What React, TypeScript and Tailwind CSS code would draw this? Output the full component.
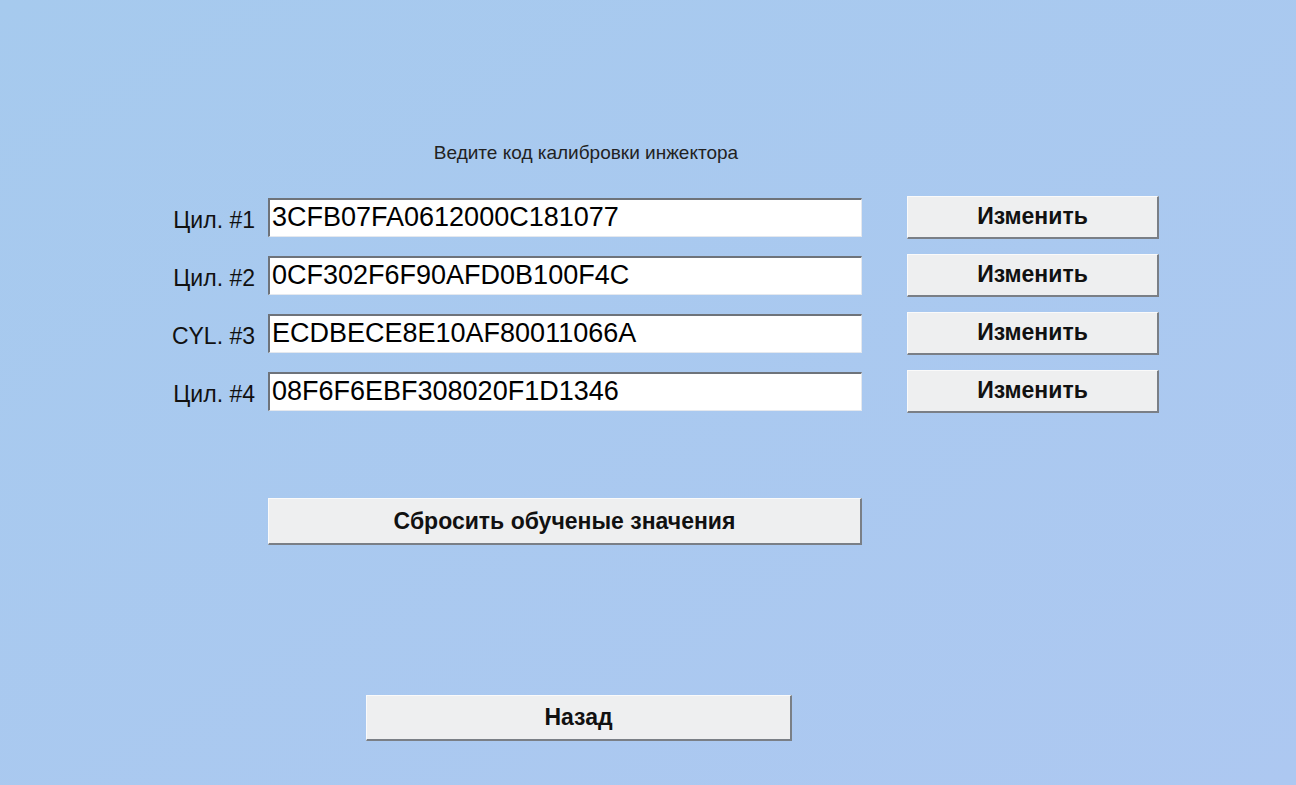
import React from "react";

const rows = [
  { label: "Цил. #1", code: "3CFB07FA0612000C181077" },
  { label: "Цил. #2", code: "0CF302F6F90AFD0B100F4C" },
  { label: "CYL. #3", code: "ECDBECE8E10AF80011066A" },
  { label: "Цил. #4", code: "08F6F6EBF308020F1D1346" },
];

const btn =
  "flex items-center justify-center bg-[#eeeff0] border-t border-l border-t-[#fafafa] border-l-[#fafafa] border-r-2 border-b-2 border-r-[#7a7f86] border-b-[#7a7f86] font-bold text-[23px] text-[#111]";

const App: React.FC = () => {
  return (
    <div
      className="w-full h-[785px] bg-gradient-to-br from-[#a6caee] to-[#adc8f1] overflow-hidden"
      style={{ fontFamily: '"Liberation Sans", Arial, sans-serif' }}
    >
      {/* заголовок */}
      <div className="pt-[143px] pl-[386px] w-[786px] text-center text-[19px] leading-[20px] text-[#222]">
        Ведите код калибровки инжектора
      </div>

      {/* строки цилиндров */}
      <div className="mt-[33px] flex flex-col gap-[16px]">
        {rows.map((r) => (
          <div key={r.code} className="flex items-center h-[42px]">
            <div className="w-[268px] pr-[13px] text-right text-[23px] text-[#111] pt-[6px]">
              {r.label}
            </div>
            <div className="w-[594px] h-[39px] bg-white border-t-2 border-l-2 border-t-[#6e737a] border-l-[#6e737a] border-r border-b border-r-[#e4e8ee] border-b-[#e4e8ee] flex items-center pl-[2px] text-[27px] text-black">
              {r.code}
            </div>
            <button className={btn + " ml-[45px] w-[252px] h-[43px]"}>Изменить</button>
          </div>
        ))}
      </div>

      {/* сброс */}
      <div className="mt-[86px] pl-[268px]">
        <button className={btn + " w-[594px] h-[47px]"}>Сбросить обученые значения</button>
      </div>

      {/* назад */}
      <div className="mt-[150px] pl-[366px]">
        <button className={btn + " w-[426px] h-[46px]"}>Назад</button>
      </div>
    </div>
  );
};

export default App;
